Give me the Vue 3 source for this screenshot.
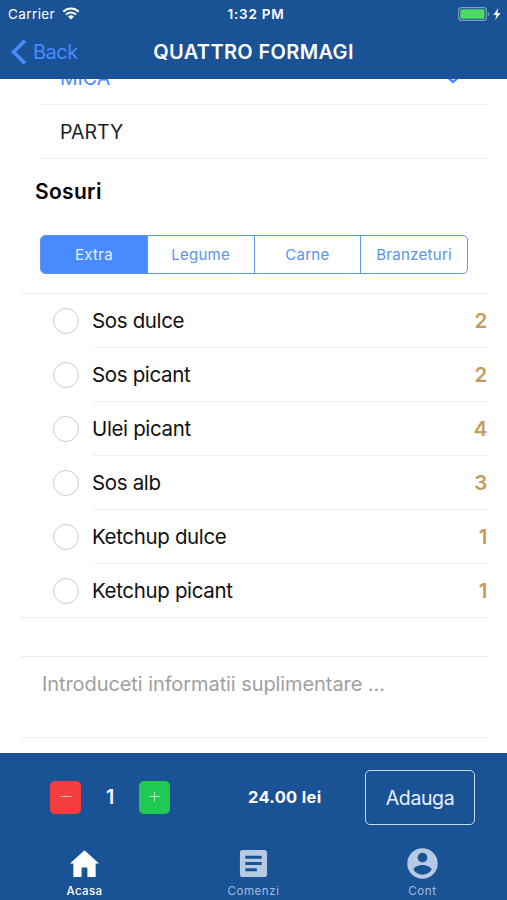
<template>
  <div class="page">
    <header class="header">
      <div class="status">
        <div class="carrier">
          <span>Carrier</span>
          <svg class="wifi" viewBox="0 0 18 13">
            <path d="M1.3 4.7a11 11 0 0 1 15.4 0" />
            <path d="M4 7.6a7.1 7.1 0 0 1 10 0" />
            <path class="dot" d="M9 12.6 6 9.7a4.3 4.3 0 0 1 6 0z" />
          </svg>
        </div>
        <span class="time">1:32 PM</span>
        <svg class="battery" viewBox="0 0 44 14">
          <rect x=".6" y=".6" width="27.8" height="12.8" rx="3" fill="none" stroke="#7f9fc4" stroke-width="1.1" />
          <rect x="2.2" y="2.2" width="24.4" height="9.6" rx="1.6" fill="#4cd964" />
          <path d="M29.8 5q1.6.5 1.6 2t-1.6 2z" fill="#7f9fc4" />
          <path d="M40.3 1 35.3 8h3.1l-1.1 5 5.2-7h-3.2z" fill="#fff" />
        </svg>
      </div>
      <div class="navbar">
        <div class="back">
          <svg class="chevron" viewBox="0 0 16 26"><path d="M14 1.5 2.5 13 14 24.5" /></svg>
          <span>Back</span>
        </div>
        <h1 class="title">QUATTRO FORMAGI</h1>
      </div>
    </header>

    <main class="content">
      <div class="size active">
        <span>MICA</span>
        <svg class="check" viewBox="0 0 16 12"><path d="M1 4l7 6 7-6" /></svg>
      </div>
      <div class="size"><span>PARTY</span></div>
      <h2 class="heading">Sosuri</h2>
      <div class="segment">
        <button
          v-for="tab in tabs"
          :key="tab"
          :class="{ selected: tab === current }"
          @click="current = tab"
        >{{ tab }}</button>
      </div>
      <ul class="list">
        <li v-for="sauce in sauces" :key="sauce.name">
          <span class="radio"></span>
          <div class="row">
            <span>{{ sauce.name }}</span>
            <b>{{ sauce.price }}</b>
          </div>
        </li>
      </ul>
      <div class="notes">Introduceti informatii suplimentare ...</div>
    </main>

    <section class="order">
      <div class="stepper">
        <button class="minus" @click="count > 1 && count--">
          <svg viewBox="0 0 12 12"><path d="M.5 5.5h11" /></svg>
        </button>
        <span class="count">{{ count }}</span>
        <button class="plus" @click="count++">
          <svg viewBox="0 0 12 12"><path d="M.5 5.5h10M5.5.5v10" /></svg>
        </button>
      </div>
      <span class="total">{{ (count * 24).toFixed(2) }} lei</span>
      <button class="add">Adauga</button>
    </section>

    <nav class="tabbar">
      <a class="tab on">
        <svg viewBox="0 0 32 32"><path d="M16 2.2 1 16h3.500v14H13V20h6v10h8.500V16H31z" /></svg>
        <span>Acasa</span>
      </a>
      <a class="tab">
        <svg viewBox="0 0 32 32">
          <path fill-rule="evenodd" d="M5 2h22a3 3 0 0 1 3 3v22a3 3 0 0 1-3 3H5a3 3 0 0 1-3-3V5a3 3 0 0 1 3-3zM7.500 8v3h17V8zM7.500 14.5v3h17v-3zM7.500 21v3h12v-3z" />
        </svg>
        <span>Comenzi</span>
      </a>
      <a class="tab">
        <svg viewBox="0 0 32 32">
          <path fill-rule="evenodd" d="M16 .3a15.7 15.7 0 1 0 0 31.4A15.7 15.7 0 0 0 16 .3zM16 5a5 5 0 1 1 0 10 5 5 0 0 1 0-10zM16 27.5c-4 0-7.5-2-9.4-5 .1-3.200 6.300-5 9.400-5s9.300 1.800 9.400 5c-1.900 3-5.400 5-9.400 5z" />
        </svg>
        <span>Cont</span>
      </a>
    </nav>
  </div>
</template>

<script setup>
import { ref } from 'vue'

const tabs = ['Extra', 'Legume', 'Carne', 'Branzeturi']
const current = ref('Extra')
const count = ref(1)

const sauces = [
  { name: 'Sos dulce', price: 2 },
  { name: 'Sos picant', price: 2 },
  { name: 'Ulei picant', price: 4 },
  { name: 'Sos alb', price: 3 },
  { name: 'Ketchup dulce', price: 1 },
  { name: 'Ketchup picant', price: 1 }
]
</script>

<style>
body {
  margin: 0;
  background: #fff;
}
</style>

<style scoped>
.page {
  display: flex;
  flex-direction: column;
  height: 900px;
  overflow: hidden;
  font-family: Inter, "Liberation Sans", sans-serif;
  color: #111;
}

.page * {
  box-sizing: border-box;
}

button {
  font-family: inherit;
  padding: 0;
  margin: 0;
  border: none;
  background: none;
}

.header {
  flex: none;
  height: 79px;
  background: #1a5296;
  color: #fff;
}

.status {
  display: grid;
  grid-template-columns: 1fr auto 1fr;
  align-items: center;
  height: 27px;
  padding: 0 5px 0 8px;
  font-size: 13.5px;
}

.carrier {
  display: flex;
  align-items: center;
  gap: 7px;
  letter-spacing: 0.4px;
}

.wifi {
  width: 18px;
  height: 13px;
  fill: none;
  stroke: #fff;
  stroke-width: 2;
}

.wifi .dot {
  fill: #fff;
  stroke: none;
}

.time {
  padding-left: 2px;
  font-weight: 600;
  letter-spacing: 0.8px;
}

.battery {
  justify-self: end;
  width: 44px;
  height: 14px;
}

.navbar {
  display: grid;
  grid-template-columns: 1fr auto 1fr;
  align-items: center;
  height: 50px;
  padding: 0 11px;
}

.back {
  display: flex;
  align-items: center;
  gap: 6px;
  color: #488aff;
  font-size: 20px;
  letter-spacing: -0.5px;
}

.chevron {
  width: 16px;
  height: 26px;
  fill: none;
  stroke: #488aff;
  stroke-width: 3.6;
}

.title {
  margin: 0;
  font-size: 20px;
  font-weight: 600;
  letter-spacing: 0.35px;
}

.content {
  flex: none;
  height: 674px;
  overflow: hidden;
}

.size {
  display: flex;
  align-items: center;
  justify-content: space-between;
  height: 54px;
  margin: 0 19px 0 40px;
  padding: 0 27px 0 20px;
  border-bottom: 1px solid #f0f0f0;
  font-size: 19.5px;
  color: #222;
}

.size.active {
  margin-top: -28px;
  color: #488aff;
}

.check {
  width: 16px;
  height: 12px;
  fill: none;
  stroke: #488aff;
  stroke-width: 2.4;
}

.heading {
  margin: 20px 0 0 35px;
  height: 26px;
  line-height: 26px;
  font-size: 21px;
  font-weight: 600;
  letter-spacing: 0.3px;
  color: #000;
}

.segment {
  display: flex;
  width: 428px;
  height: 39px;
  margin: 30px 0 0 40px;
  border: 1px solid #5f96ee;
  border-radius: 5px;
  overflow: hidden;
}

.segment button {
  flex: 1;
  font-size: 15px;
  color: #5a93ef;
  letter-spacing: 0.3px;
}

.segment button + button {
  border-left: 1px solid #5f96ee;
}

.segment .selected {
  background: #488aff;
  color: #e8f0ff;
}

.list {
  list-style: none;
  margin: 19px 19px 0 21px;
  padding: 0;
  border-top: 1px solid #ebebeb;
  border-bottom: 1px solid #ebebeb;
}

.list li {
  display: flex;
  align-items: center;
  height: 54.1px;
  padding-left: 32px;
}

.radio {
  width: 26px;
  height: 26px;
  border: 1px solid #ccc;
  border-radius: 50%;
}

.row {
  flex: 1;
  display: flex;
  align-items: center;
  justify-content: space-between;
  height: 100%;
  margin-left: 13px;
  border-bottom: 1px solid #f0f0f0;
  font-size: 20.5px;
  letter-spacing: -0.35px;
}

.list li:last-child {
  height: 53px;
}

.list li:last-child .row {
  border-bottom: none;
}

.row b {
  padding-right: 1px;
  font-weight: 600;
  color: #c69c5b;
}

.notes {
  height: 82px;
  margin: 38px 19px 0 21px;
  padding: 15px 0 0 21px;
  border-top: 1px solid #ebebeb;
  border-bottom: 1px solid #f0f0f0;
  font-size: 20px;
  line-height: 24px;
  letter-spacing: -0.08px;
  color: #a0a0a0;
}

.order {
  flex: none;
  display: flex;
  align-items: center;
  height: 88px;
  padding: 0 32px 0 50px;
  background: #1a5296;
  color: #fff;
}

.stepper {
  display: flex;
  align-items: center;
  width: 120px;
  justify-content: space-between;
}

.stepper button {
  display: flex;
  align-items: center;
  justify-content: center;
  width: 31px;
  height: 33px;
  border-radius: 5px;
}

.stepper svg {
  width: 12px;
  height: 12px;
  stroke: #fff;
  stroke-opacity: 0.65;
  stroke-width: 1;
}

.minus {
  background: #f53d3d;
}

.plus {
  background: #20c952;
}

.count {
  font-size: 19.5px;
  font-weight: 600;
}

.total {
  width: 74px;
  margin-left: 78px;
  font-size: 16.5px;
  font-weight: 700;
  letter-spacing: 0.3px;
  white-space: nowrap;
}

.order .add {
  width: 110px;
  height: 55px;
  margin-left: auto;
  border: 1px solid #c5d9f2;
  border-radius: 5px;
  color: #e6effb;
  font-size: 19.5px;
  letter-spacing: -0.4px;
  padding-top: 2px;
}

.tabbar {
  flex: none;
  display: flex;
  height: 59px;
  background: #1a5296;
}

.tab {
  flex: 1;
  display: flex;
  flex-direction: column;
  align-items: center;
  padding-top: 7px;
  font-size: 11.5px;
  line-height: 14px;
  letter-spacing: 0.6px;
  color: #a6bcdb;
}

.tab svg {
  width: 31px;
  height: 31px;
  margin-bottom: 5px;
  fill: #b7c9e3;
}

.tab.on {
  color: #fff;
  font-weight: 500;
  letter-spacing: 0.4px;
}

.tab.on svg {
  fill: #fff;
}
</style>
